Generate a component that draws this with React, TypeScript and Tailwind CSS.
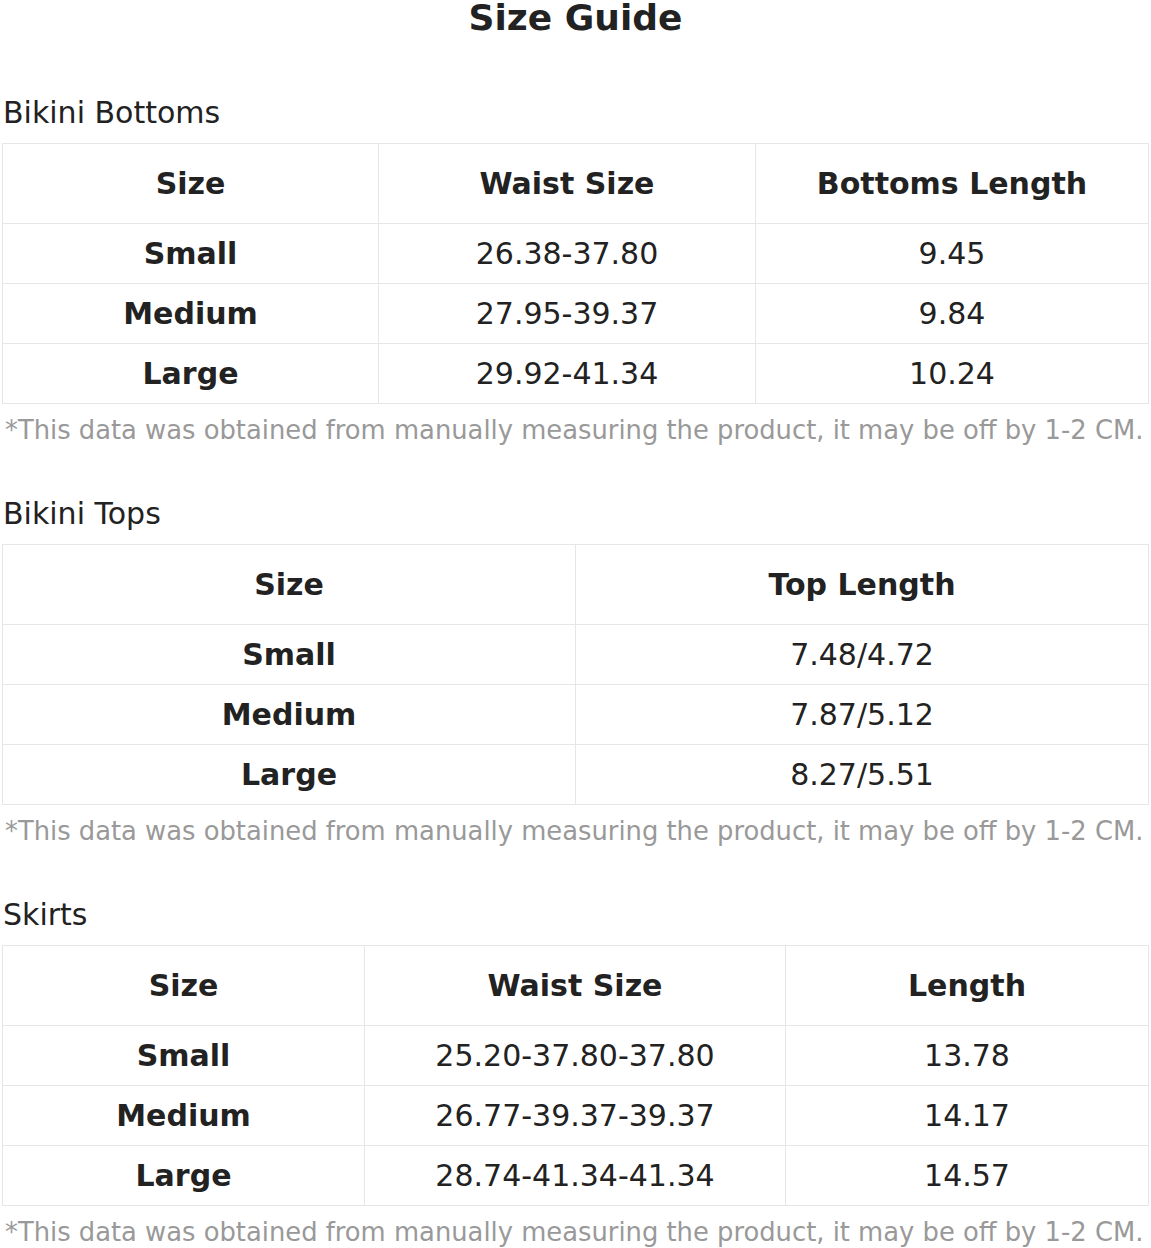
const sections = [
  {
    title: 'Bikini Bottoms',
    cols: ['Size', 'Waist Size', 'Bottoms Length'],
    widths: ['w-[376px]', 'w-[377px]', ''],
    rows: [
      ['Small', '26.38-37.80', '9.45'],
      ['Medium', '27.95-39.37', '9.84'],
      ['Large', '29.92-41.34', '10.24'],
    ],
  },
  {
    title: 'Bikini Tops',
    cols: ['Size', 'Top Length'],
    widths: ['w-[573px]', ''],
    rows: [
      ['Small', '7.48/4.72'],
      ['Medium', '7.87/5.12'],
      ['Large', '8.27/5.51'],
    ],
  },
  {
    title: 'Skirts',
    cols: ['Size', 'Waist Size', 'Length'],
    widths: ['w-[362px]', 'w-[421px]', ''],
    rows: [
      ['Small', '25.20-37.80-37.80', '13.78'],
      ['Medium', '26.77-39.37-39.37', '14.17'],
      ['Large', '28.74-41.34-41.34', '14.57'],
    ],
  },
];

export default function App() {
  return (
    <div className="min-h-screen bg-white text-[#222] px-[2px] font-['DejaVu_Sans',sans-serif]">
      <h1 className="text-center text-[36px] font-bold leading-[36px] h-[34px]">Size Guide</h1>

      {sections.map((s, si) => (
        <section key={si} className={si === 0 ? 'mt-[61px]' : 'mt-[51px]'}>
          <h2 className="text-[30px] leading-[36px] pl-px">{s.title}</h2>
          <table className="mt-3 w-full border-collapse table-fixed">
            <thead>
              <tr className="h-[80px]">
                {s.cols.map((c, i) => (
                  <th key={i} className={`${s.widths[i]} border border-[#e6e6e6] text-[30px] font-bold text-center`}>
                    {c}
                  </th>
                ))}
              </tr>
            </thead>
            <tbody>
              {s.rows.map((r, ri) => (
                <tr key={ri} className="h-[60px]">
                  {r.map((v, i) => (
                    <td
                      key={i}
                      className={`border border-[#e6e6e6] text-center text-[30px] ${i === 0 ? 'font-bold' : ''}`}
                    >
                      {v}
                    </td>
                  ))}
                </tr>
              ))}
            </tbody>
          </table>
          <p className="text-[25.8px] leading-[30px] mt-[11px] text-[#999] pl-[3px] whitespace-nowrap">
            *This data was obtained from manually measuring the product, it may be off by 1-2 CM.
          </p>
        </section>
      ))}
    </div>
  );
}
